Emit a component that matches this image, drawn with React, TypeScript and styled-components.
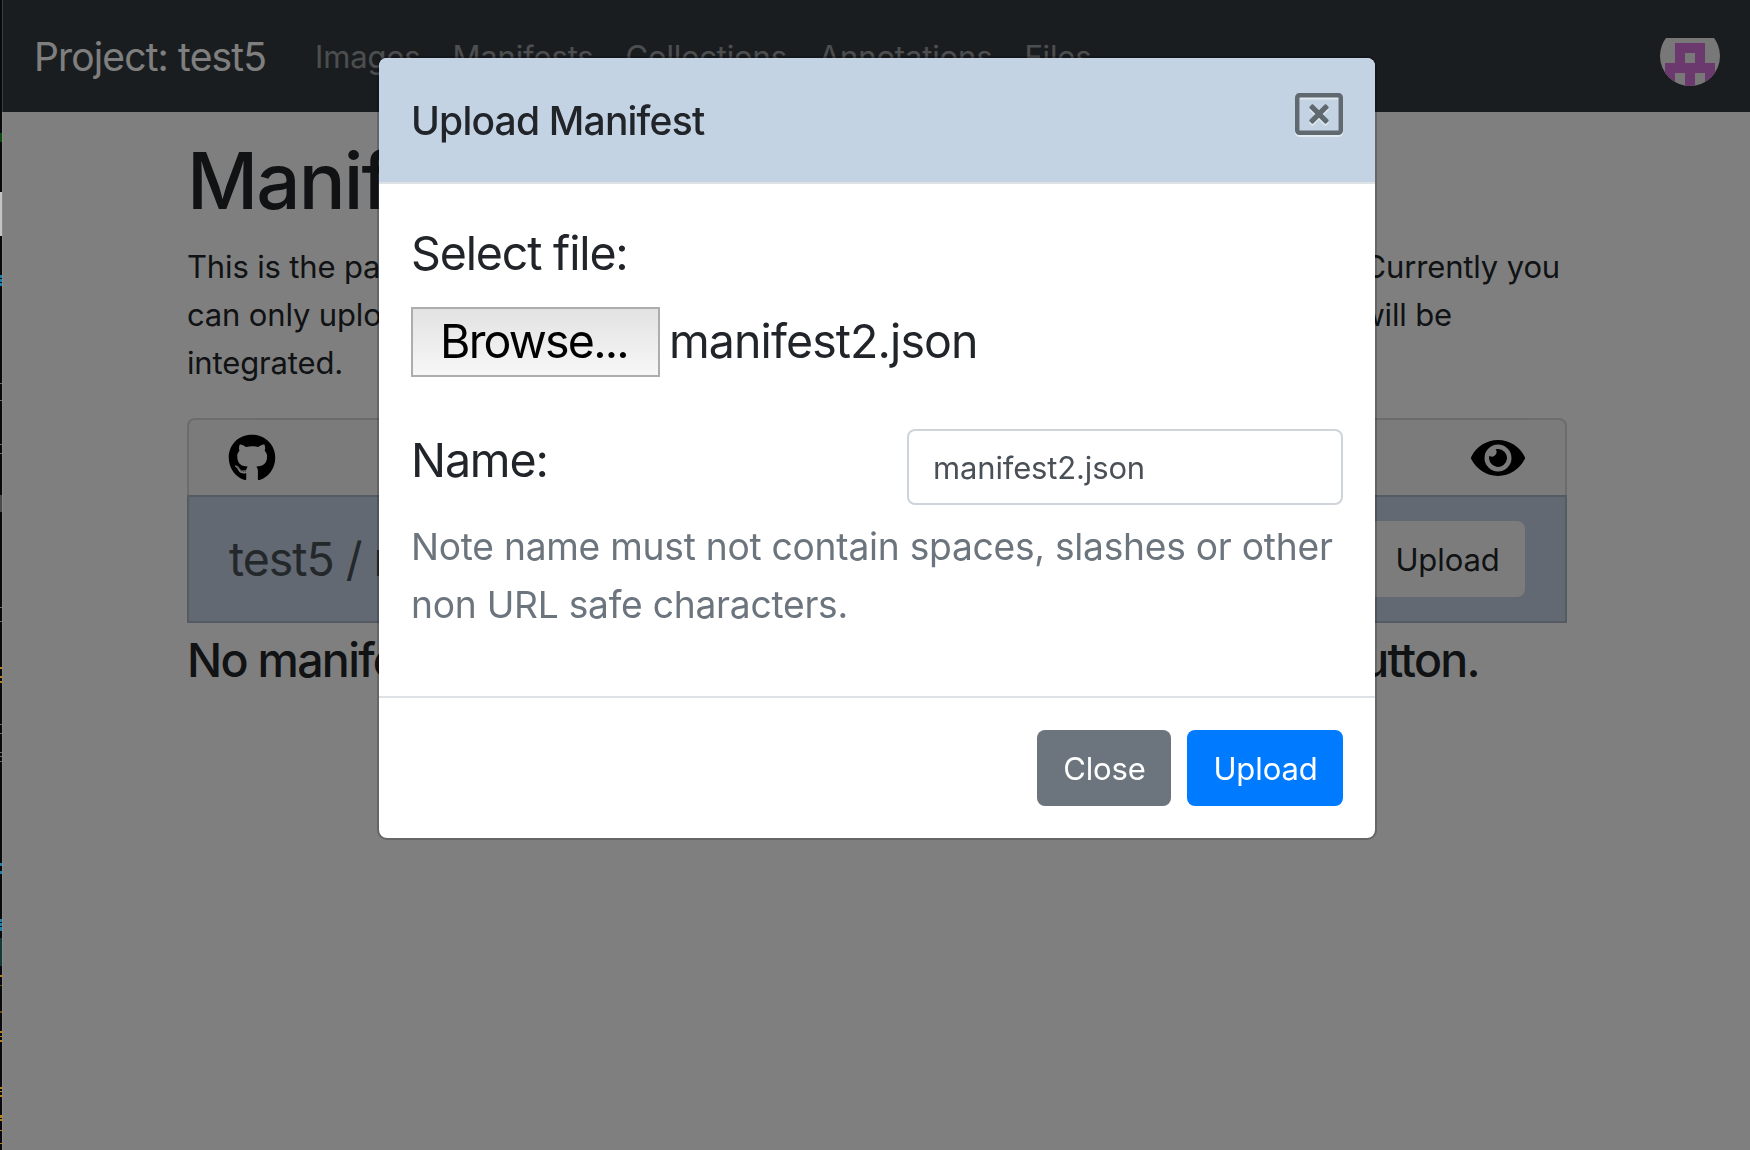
import React from 'react';
import styled, { createGlobalStyle } from 'styled-components';
import { FaGithub, FaEye, FaRegWindowClose } from 'react-icons/fa';

const GlobalStyle = createGlobalStyle`
  *, *::before, *::after { box-sizing: border-box; }
  body {
    margin: 0;
    background: #fff;
    color: #212529;
    font-family: Inter, "Liberation Sans", sans-serif;
    font-size: 31px;
    font-weight: 400;
    line-height: 48px;
    letter-spacing: -0.15px;
    overflow: hidden;
  }
  h1, h2, h3, p { margin: 0; }
`;

const Shell = styled.div`
  display: flex;
  height: 1150px;
  overflow: hidden;
`;

type Mark = [top: number, bottom: number, color: string];

const marks: Mark[] = [
  [133, 142, '#0a4a0a'],
  [192, 236, '#c4c4c4'],
  [275, 278, '#1583ad'],
  [279, 282, '#1583ad'],
  [283, 286, '#1583ad'],
  [383, 384, '#6a6a6a'],
  [400, 401, '#6a6a6a'],
  [444, 445, '#6a6a6a'],
  [453, 454, '#6a6a6a'],
  [495, 512, '#4c4c4c'],
  [607, 608, '#6a6a6a'],
  [621, 622, '#6a6a6a'],
  [667, 669, '#b98310'],
  [676, 678, '#b98310'],
  [681, 683, '#b98310'],
  [724, 725, '#6a6a6a'],
  [733, 734, '#6a6a6a'],
  [752, 753, '#6a6a6a'],
  [756, 757, '#6a6a6a'],
  [761, 762, '#6a6a6a'],
  [863, 866, '#1583ad'],
  [871, 874, '#1583ad'],
  [919, 922, '#1583ad'],
  [923, 926, '#1583ad'],
  [927, 931, '#1583ad'],
  [938, 966, '#15393b'],
  [975, 977, '#b98310'],
  [985, 986, '#6b4c0a'],
  [1011, 1013, '#6b4c0a'],
  [1031, 1033, '#b98310'],
  [1036, 1037, '#b98310'],
  [1040, 1042, '#b98310'],
  [1087, 1089, '#b98310'],
  [1091, 1092, '#b98310'],
  [1095, 1097, '#b98310'],
  [1115, 1118, '#b98310'],
  [1119, 1121, '#b98310'],
  [1130, 1131, '#b98310'],
  [1143, 1144, '#b98310'],
];

const ground = '#07090a';
const stops = marks
  .map(([a, b, c]) => `${ground} ${a}px, ${c} ${a}px, ${c} ${b}px, ${ground} ${b}px`)
  .join(', ');

const Desktop = styled.div`
  flex: 0 0 2px;
  background: linear-gradient(${ground} 0, ${stops});
`;

const WindowEdge = styled.div`
  flex: 0 0 1px;
  background: linear-gradient(#3c3f41 112px, #898989 112px);
`;

const Page = styled.div`
  flex: 1;
  min-width: 0;
`;

const Navbar = styled.nav`
  display: flex;
  align-items: center;
  height: 112px;
  padding: 2px 30px 0 31px;
  background: #343a40;
`;

const Brand = styled.span`
  margin-right: 33px;
  font-size: 39px;
  letter-spacing: -0.85px;
  color: #fff;
`;

const NavItem = styled.span`
  padding: 0 16px;
  letter-spacing: -0.15px;
  color: rgba(255, 255, 255, 0.5);
`;

const Avatar = styled.svg`
  width: 60px;
  height: 48px;
  margin: 10px 0 0 auto;
`;

const Container = styled.main`
  width: 1380px;
  margin-left: 184px;
  padding-top: 21px;
`;

const Title = styled.h1`
  font-size: 78px;
  line-height: 96px;
  font-weight: 500;
  letter-spacing: -1.9px;
  margin-bottom: 14px;
`;

const Intro = styled.div`
  margin-bottom: 31px;
`;

const Line = styled.p<{ $inset: number }>`
  display: flex;
  justify-content: space-between;
  padding-right: ${(p) => p.$inset}px;
  white-space: nowrap;
`;

const CardHeader = styled.div`
  display: flex;
  align-items: center;
  justify-content: space-between;
  height: 77px;
  padding: 1px 40px 0 39px;
  border: 2px solid rgba(0, 0, 0, 0.125);
  border-bottom: 0;
  border-radius: 8px 8px 0 0;
  background: #f7f7f7;
  color: #000;
  font-size: 48px;

  svg { display: block; }
`;

const Eye = styled(FaEye)`
  width: 54px;
`;

const CardRow = styled.div`
  display: flex;
  align-items: center;
  justify-content: space-between;
  height: 128px;
  padding: 0 40px;
  border: 2px solid #a9b7c7;
  background: #c4d3e4;
`;

const RowTitle = styled.h3`
  font-size: 46.5px;
  font-weight: 400;
  letter-spacing: -1.05px;
  color: #495057;
`;

const Empty = styled.h2<{ $inset: number }>`
  display: flex;
  justify-content: space-between;
  margin-top: 8px;
  padding-right: ${(p) => p.$inset}px;
  font-size: 46.5px;
  line-height: 58px;
  font-weight: 500;
  letter-spacing: -1.7px;
`;

const tones = {
  light: { bg: '#f8f9fa', fg: '#212529' },
  secondary: { bg: '#6c757d', fg: '#fff' },
  primary: { bg: '#007bff', fg: '#fff' },
};

const Button = styled.button<{ $tone: keyof typeof tones; $width: number }>`
  width: ${(p) => p.$width}px;
  height: 76px;
  padding: 1px 0 0 1px;
  border: 0;
  border-radius: 8px;
  background: ${(p) => tones[p.$tone].bg};
  color: ${(p) => tones[p.$tone].fg};
  font: inherit;
  letter-spacing: -0.1px;
`;

const Backdrop = styled.div`
  position: fixed;
  inset: 0 0 0 3px;
  padding: 56px 0 0 374px;
  background: rgba(0, 0, 0, 0.5);
`;

const Dialog = styled.div`
  width: 1000px;
  height: 784px;
  display: flex;
  flex-direction: column;
  border: 2px solid rgba(0, 0, 0, 0.2);
  border-radius: 10px;
  background: #fff;
  background-clip: padding-box;
`;

const DialogHeader = styled.header`
  display: flex;
  justify-content: space-between;
  height: 126px;
  padding: 32px;
  border-bottom: 2px solid #dee2e6;
  border-radius: 8px 8px 0 0;
  background: #c3d3e3;
`;

const DialogTitle = styled.h2`
  font-size: 39px;
  line-height: 62px;
  font-weight: 500;
  letter-spacing: -0.8px;
`;

const CloseIcon = styled.button`
  height: 48px;
  padding: 0;
  border: 0;
  background: none;
  color: #000;
  font-size: 48px;
  opacity: 0.5;

  svg {
    display: block;
    filter: drop-shadow(0 2px 0 #fff);
  }
`;

const DialogBody = styled.div`
  flex: 1;
  padding: 32px;
`;

const Label = styled.div`
  height: 72px;
  font-size: 46.5px;
  line-height: 74px;
  letter-spacing: -1.15px;
`;

const FileField = styled.div`
  display: flex;
  align-items: center;
  height: 70px;
  margin: 19px 0 47px;
  font-size: 46.5px;
  letter-spacing: -0.9px;
`;

const FileName = styled.span`
  padding-bottom: 2px;
`;

const Browse = styled.button`
  width: 249px;
  height: 70px;
  margin-right: 9px;
  padding: 0 3px 2px 0;
  border: 2px solid #adadad;
  background: linear-gradient(#e2e2e2, #f7f7f7);
  color: #000;
  font: inherit;
  letter-spacing: -1.8px;
`;

const NameRow = styled.div`
  display: flex;
  justify-content: space-between;
  align-items: flex-start;
  margin-top: 52px;
  height: 89px;
`;

const NameLabel = styled(Label)`
  margin-top: -6px;
`;

const NameInput = styled.input`
  width: 436px;
  height: 76px;
  padding: 0 24px;
  border: 2px solid #ced4da;
  border-radius: 8px;
  background: #fff;
  color: #495057;
  font: inherit;
  letter-spacing: -0.15px;
`;

const Hint = styled.p`
  font-size: 37.2px;
  line-height: 58px;
  letter-spacing: -0.26px;
  color: #6c757d;
  white-space: nowrap;
`;

const DialogFooter = styled.footer`
  display: flex;
  justify-content: flex-end;
  gap: 16px;
  height: 142px;
  padding: 32px;
  border-top: 2px solid #dee2e6;
`;

const links = ['Images', 'Manifests', 'Collections', 'Annotations', 'Files'];

function Identicon() {
  return (
    <Avatar viewBox="0 0 60 48">
      <clipPath id="round">
        <circle cx="30" cy="18" r="30" />
      </clipPath>
      <g clipPath="url(#round)">
        <rect width="60" height="48" fill="#f0f0f0" />
        <path
          fill="#d672dc"
          d="M15 5h30v20h10v23h-10v-13h-10v13h-10v-13h-10v13h-10v-23h10zM25 15v10h10v-10z"
        />
      </g>
    </Avatar>
  );
}

export default function App() {
  return (
    <>
      <GlobalStyle />
      <Shell>
        <Desktop />
        <WindowEdge />
        <Page>
          <Navbar>
            <Brand>Project: test5</Brand>
            {links.map((l) => (
              <NavItem key={l}>{l}</NavItem>
            ))}
            <Identicon />
          </Navbar>
          <Container>
            <Title>Manifests</Title>
            <Intro>
              <Line $inset={7}>
                <span>This is the page</span>
                <span>Currently you</span>
              </Line>
              <Line $inset={115}>
                <span>can only upload</span>
                <span>will be</span>
              </Line>
              <Line $inset={0}>integrated.</Line>
            </Intro>
            <CardHeader>
              <FaGithub />
              <Eye />
            </CardHeader>
            <CardRow>
              <RowTitle>test5 / manifests</RowTitle>
              <Button $tone="light" $width={156}>Upload</Button>
            </CardRow>
            <Empty $inset={88}>
              <span>No manifests</span>
              <span>button.</span>
            </Empty>
          </Container>
        </Page>
      </Shell>
      <Backdrop>
        <Dialog role="dialog">
          <DialogHeader>
            <DialogTitle>Upload Manifest</DialogTitle>
            <CloseIcon aria-label="Close">
              <FaRegWindowClose />
            </CloseIcon>
          </DialogHeader>
          <DialogBody>
            <Label>Select file:</Label>
            <FileField>
              <Browse>Browse...</Browse>
              <FileName>manifest2.json</FileName>
            </FileField>
            <NameRow>
              <NameLabel>Name:</NameLabel>
              <NameInput defaultValue="manifest2.json" />
            </NameRow>
            <Hint>
              Note name must not contain spaces, slashes or other
              <br />
              non URL safe characters.
            </Hint>
          </DialogBody>
          <DialogFooter>
            <Button $tone="secondary" $width={134}>Close</Button>
            <Button $tone="primary" $width={156}>Upload</Button>
          </DialogFooter>
        </Dialog>
      </Backdrop>
    </>
  );
}
